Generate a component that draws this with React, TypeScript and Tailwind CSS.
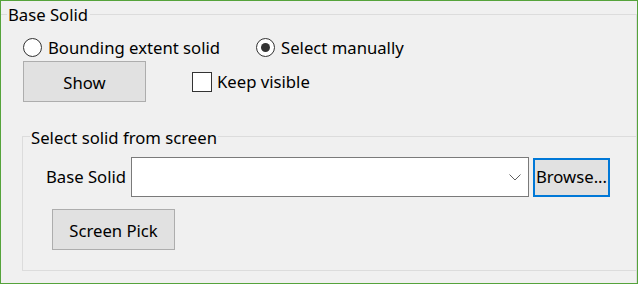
import React from "react";

function Radio({ checked }: { checked?: boolean }) {
  return (
    <div className="w-[19px] h-[19px] rounded-full border border-[#333333] bg-white flex items-center justify-center shrink-0">
      {checked && <div className="w-[9px] h-[9px] rounded-full bg-[#333333]" />}
    </div>
  );
}

export default function App() {
  return (
    <div
      className="w-[638px] h-[284px] bg-[#f0f0f0] border border-[#55a33b] flex flex-col overflow-hidden text-[16.7px] leading-[20px] text-black"
      style={{ fontFamily: '"Noto Sans", "Open Sans", sans-serif' }}
    >
      <div className="mt-[13px] flex-1 border-t border-r border-[#dcdcdc] flex flex-col">
        <div className="ml-[6px] -mt-[10px] pl-[1px] pr-[2px] bg-[#f0f0f0] w-fit">Base Solid</div>

        <div className="mt-[13px] ml-[22px] flex items-start h-[20px]">
          <div className="w-[233px] flex items-start">
            <Radio />
            <span className="ml-[6px]">Bounding extent solid</span>
          </div>
          <div className="flex items-start">
            <Radio checked />
            <span className="ml-[6px]">Select manually</span>
          </div>
        </div>

        <div className="mt-[3px] ml-[22px] flex items-start">
          <button className="w-[123px] h-[41px] bg-[#e1e1e1] border border-[#adadad] flex items-center justify-center pt-[2px]">
            Show
          </button>
          <div className="ml-[46px] mt-[11px] flex items-start">
            <div className="w-[20px] h-[20px] border border-[#333333] bg-white shrink-0" />
            <span className="ml-[5px]">Keep visible</span>
          </div>
        </div>

        <div className="mt-[34px] ml-[21px] -mr-[1px] h-[135px] border border-[#dcdcdc] flex flex-col">
          <div className="ml-[7px] -mt-[9px] px-[1px] bg-[#f0f0f0] w-fit">Select solid from screen</div>

          <div className="mt-[9px] ml-[23px] flex items-center h-[40px]">
            <div className="w-[85px]">Base Solid</div>
            <div className="w-[398px] h-[40px] border border-[#7a7a7a] bg-white flex items-center justify-end pr-[7px]">
              <svg width="12" height="7" viewBox="0 0 12 7" className="mt-[1px]">
                <path d="M0.5 0.5 L6 6 L11.5 0.5" fill="none" stroke="#606060" strokeWidth="1" />
              </svg>
            </div>
            <button className="ml-[4px] w-[77px] h-[39px] bg-[#e1e1e1] border-2 border-[#0078d7] flex items-center justify-center">
              Browse...
            </button>
          </div>

          <button className="mt-[12px] ml-[29px] w-[123px] h-[41px] bg-[#e1e1e1] border border-[#adadad] flex items-center justify-center pt-[2px]">
            Screen Pick
          </button>
        </div>
      </div>
    </div>
  );
}
